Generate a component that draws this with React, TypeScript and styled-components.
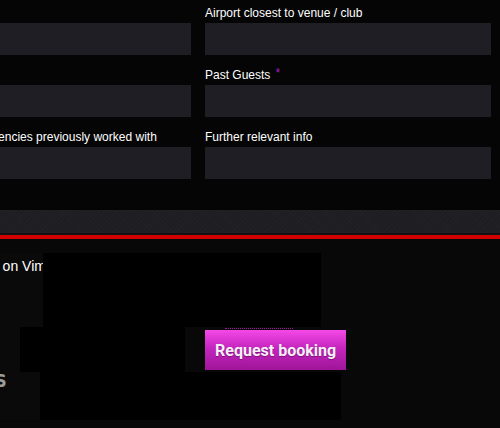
import React from 'react';
import styled, { createGlobalStyle } from 'styled-components';

const Global = createGlobalStyle`
  html, body { margin: 0; padding: 0; background: #080808; overflow: hidden; }
  body { font-family: "Liberation Sans", Arial, sans-serif; }
`;

const Page = styled.div`
  width: 500px;
  height: 428px;
  overflow: hidden;
  display: flex;
  flex-direction: column;
`;

const FormSection = styled.section`
  background: #050505;
  padding: 6px 0 31px;
`;

const FormGrid = styled.div`
  display: grid;
  grid-template-columns: 285px 286px;
  column-gap: 14px;
  row-gap: 13px;
  margin-left: -94px;
`;

const Field = styled.div`
  display: flex;
  flex-direction: column;
  gap: 3px;
`;

const Label = styled.label`
  font-size: 12px;
  line-height: 14px;
  height: 14px;
  color: #ffffff;
  white-space: nowrap;
`;

const Required = styled.span`
  color: #a21fc4;
  margin-left: 5px;
  line-height: 0;
  vertical-align: 2px;
`;

const Input = styled.input`
  box-sizing: border-box;
  height: 32px;
  width: 100%;
  border: 0;
  margin: 0;
  background: #201e25;
  outline: none;
`;

const Bar = styled.div`
  height: 23px;
  background-color: #1f1e23;
  background-image: repeating-linear-gradient(45deg, rgba(255,255,255,0.01) 0 1px, transparent 1px 3px),
    repeating-linear-gradient(-45deg, rgba(0,0,0,0.05) 0 1px, transparent 1px 4px);
  border-bottom: 2px solid #121114;
`;

const RedLine = styled.div`
  height: 4px;
  background: #d30000;
`;

const Lower = styled.section`
  flex: 1;
  background: #080808;
  padding-top: 14px;
  display: flex;
  flex-direction: column;
`;

const Row = styled.div<{ $h: number }>`
  display: flex;
  height: ${p => p.$h}px;
`;

const SideCell = styled.div<{ $w: number }>`
  width: ${p => p.$w}px;
  flex: none;
  background: #0a0a0a;
  overflow: hidden;
  white-space: nowrap;
`;

const LinkText = styled.div`
  padding-top: 5px;
  margin-left: -105px;
  font-size: 14px;
  line-height: 16px;
  color: #ffffff;
`;

const Heading = styled.div`
  margin-top: 0;
  margin-left: -5px;
  font-family: "DejaVu Sans Condensed", "DejaVu Sans", sans-serif;
  font-weight: 700;
  font-size: 18px;
  line-height: 18px;
  color: #9c9c9c;
`;

const Embed = styled.div<{ $w: number }>`
  width: ${p => p.$w}px;
  flex: none;
  background: #000000;
`;

const Gap = styled.div<{ $w: number }>`
  width: ${p => p.$w}px;
  flex: none;
`;

const ButtonCol = styled.div`
  display: flex;
  flex-direction: column;
`;

const Dots = styled.div`
  margin: 1px 0 0 20px;
  width: 68px;
  border-top: 1px dotted #a0159a;
`;

const BookButton = styled.button`
  margin-top: 1px;
  width: 141px;
  height: 40px;
  border: 0;
  padding: 0 10px;
  background: linear-gradient(#f548e8 0%, #c426bd 45%, #9f1599 100%);
  color: #f6f0f6;
  font-family: Roboto, "Liberation Sans", sans-serif;
  font-weight: 700;
  font-size: 16px;
  white-space: nowrap;
  text-shadow: 0 1px 1px rgba(60, 0, 60, 0.45);
  cursor: pointer;
`;

export default function App() {
  return (
    <Page>
      <Global />
      <FormSection>
        <FormGrid>
          <Field>
            <Label>Venue name</Label>
            <Input />
          </Field>
          <Field>
            <Label>Airport closest to venue / club</Label>
            <Input />
          </Field>
          <Field>
            <Label>Capacity</Label>
            <Input />
          </Field>
          <Field>
            <Label>
              Past Guests<Required>*</Required>
            </Label>
            <Input />
          </Field>
          <Field>
            <Label>Other booking agencies previously worked with</Label>
            <Input />
          </Field>
          <Field>
            <Label>Further relevant info</Label>
            <Input />
          </Field>
        </FormGrid>
      </FormSection>
      <Bar />
      <RedLine />
      <Lower>
        <Row $h={74}>
          <SideCell $w={43}>
            <LinkText>Watch my profile on Vimeo</LinkText>
          </SideCell>
          <Embed $w={278} />
        </Row>
        <Row $h={45}>
          <SideCell $w={20} />
          <Embed $w={165} />
          <Gap $w={20} />
          <ButtonCol>
            <Dots />
            <BookButton>Request booking</BookButton>
          </ButtonCol>
        </Row>
        <Row $h={48}>
          <SideCell $w={40}>
            <Heading>S</Heading>
          </SideCell>
          <Embed $w={301} />
        </Row>
      </Lower>
    </Page>
  );
}
